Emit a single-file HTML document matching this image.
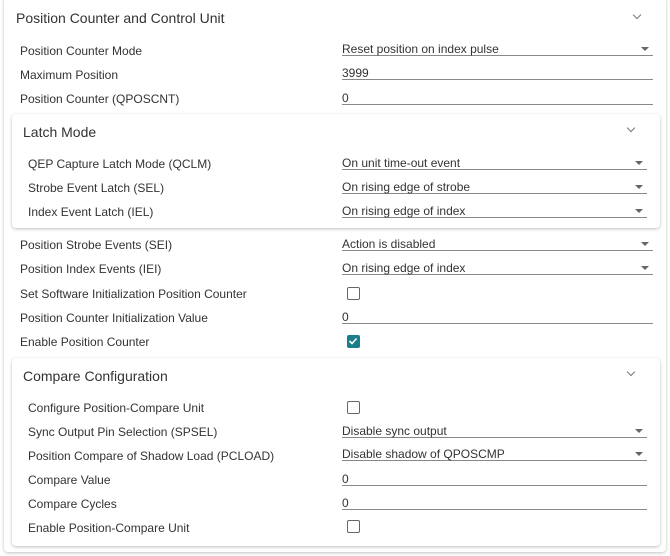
<!DOCTYPE html>
<html><head><style>
*{margin:0;padding:0;box-sizing:border-box}
body{width:670px;height:556px;background:#fff;font-family:"Liberation Sans",sans-serif;color:#333;position:relative;overflow:hidden}
.card{position:absolute;background:#fff;border-radius:4px;box-shadow:0 1px 3px rgba(0,0,0,.25)}
.t{position:absolute;font-size:14px;color:#333}
.l{position:absolute;font-size:12px;color:#333;line-height:14px}
.f{position:absolute;height:14px;font-size:12px;line-height:14px;border-bottom:1px solid #888;color:#333}
.f.s::after{content:"";position:absolute;right:4px;top:5px;border-left:4px solid transparent;border-right:4px solid transparent;border-top:4px solid #666}
.cb{position:absolute;width:13px;height:13px;border:1.5px solid #666;border-radius:2px}
.cb.on{background:#1a7f8a;border-color:#1a7f8a}
.ch{position:absolute;width:6px;height:6px;border-right:1.3px solid #777;border-bottom:1.3px solid #777;transform:rotate(45deg)}
</style></head><body>
<div class="card" style="left:4px;top:-3px;width:662px;height:555px"></div>
<div class="t" style="left:16px;top:10px">Position Counter and Control Unit</div>
<div class="ch" style="left:634px;top:12px"></div>
<div class="l" style="left:20px;top:44px">Position Counter Mode</div>
<div class="f s" style="left:342px;top:42px;width:311px">Reset position on index pulse</div>
<div class="l" style="left:20px;top:68px">Maximum Position</div>
<div class="f" style="left:342px;top:66px;width:311px">3999</div>
<div class="l" style="left:20px;top:92px">Position Counter (QPOSCNT)</div>
<div class="f" style="left:342px;top:91px;width:311px">0</div>

<div class="card" style="left:12px;top:114px;width:648px;height:114px"></div>
<div class="t" style="left:23px;top:124px">Latch Mode</div>
<div class="ch" style="left:628px;top:125px"></div>
<div class="l" style="left:28px;top:157px">QEP Capture Latch Mode (QCLM)</div>
<div class="f s" style="left:342px;top:156px;width:305px">On unit time-out event</div>
<div class="l" style="left:28px;top:181px">Strobe Event Latch (SEL)</div>
<div class="f s" style="left:342px;top:180px;width:305px">On rising edge of strobe</div>
<div class="l" style="left:28px;top:205px">Index Event Latch (IEL)</div>
<div class="f s" style="left:342px;top:204px;width:305px">On rising edge of index</div>

<div class="l" style="left:20px;top:238px">Position Strobe Events (SEI)</div>
<div class="f s" style="left:342px;top:237px;width:311px">Action is disabled</div>
<div class="l" style="left:20px;top:262px">Position Index Events (IEI)</div>
<div class="f s" style="left:342px;top:261px;width:311px">On rising edge of index</div>
<div class="l" style="left:20px;top:287px">Set Software Initialization Position Counter</div>
<div class="cb" style="left:347px;top:287px"></div>
<div class="l" style="left:20px;top:311px">Position Counter Initialization Value</div>
<div class="f" style="left:342px;top:310px;width:311px">0</div>
<div class="l" style="left:20px;top:335px">Enable Position Counter</div>
<div class="cb on" style="left:347px;top:335px"><svg width="10" height="10" viewBox="0 0 10 10" style="position:absolute;left:0;top:0"><path d="M1.5 5 L4 7.5 L8.5 2.5" stroke="#fff" stroke-width="1.6" fill="none"/></svg></div>

<div class="card" style="left:12px;top:358px;width:648px;height:188px"></div>
<div class="t" style="left:23px;top:368px">Compare Configuration</div>
<div class="ch" style="left:628px;top:369px"></div>
<div class="l" style="left:28px;top:401px">Configure Position-Compare Unit</div>
<div class="cb" style="left:347px;top:401px"></div>
<div class="l" style="left:28px;top:425px">Sync Output Pin Selection (SPSEL)</div>
<div class="f s" style="left:342px;top:424px;width:305px">Disable sync output</div>
<div class="l" style="left:28px;top:449px">Position Compare of Shadow Load (PCLOAD)</div>
<div class="f s" style="left:342px;top:447px;width:305px">Disable shadow of QPOSCMP</div>
<div class="l" style="left:28px;top:473px">Compare Value</div>
<div class="f" style="left:342px;top:472px;width:305px">0</div>
<div class="l" style="left:28px;top:497px">Compare Cycles</div>
<div class="f" style="left:342px;top:496px;width:305px">0</div>
<div class="l" style="left:28px;top:521px">Enable Position-Compare Unit</div>
<div class="cb" style="left:347px;top:520px"></div>
</body></html>
